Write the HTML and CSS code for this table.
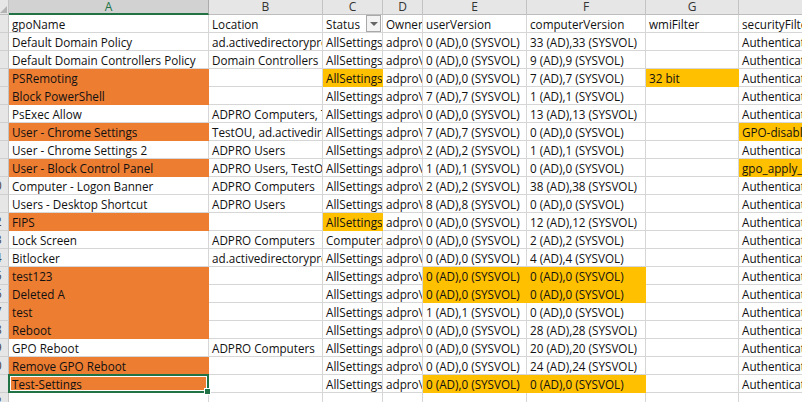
FILE: index.html
```html
<!DOCTYPE html>
<html>
<head>
<meta charset="utf-8">
<link rel="stylesheet" href="styles.css">
</head>
<body>
<div class="sheet">
  <div class="corner"><span class="tri"></span></div>
  <div class="ch sel-col">A</div><div class="ch">B</div><div class="ch">C</div><div class="ch">D</div><div class="ch">E</div><div class="ch">F</div><div class="ch">G</div><div class="ch"></div>

  <div class="rh">1</div><div class="c">gpoName</div><div class="c">Location</div><div class="c filter-cell">Status<span class="filter"><span class="ftri"></span></span></div><div class="c">Owner</div><div class="c">userVersion</div><div class="c">computerVersion</div><div class="c">wmiFilter</div><div class="c">securityFilter</div>

  <div class="rh">2</div><div class="c">Default Domain Policy</div><div class="c">ad.activedirectorypro.com</div><div class="c">AllSettings</div><div class="c">adpro\</div><div class="c">0 (AD),0 (SYSVOL)</div><div class="c">33 (AD),33 (SYSVOL)</div><div class="c"></div><div class="c">Authenticated Users</div>

  <div class="rh">3</div><div class="c">Default Domain Controllers Policy</div><div class="c">Domain Controllers</div><div class="c">AllSettings</div><div class="c">adpro\</div><div class="c">0 (AD),0 (SYSVOL)</div><div class="c">9 (AD),9 (SYSVOL)</div><div class="c"></div><div class="c">Authenticated Users</div>

  <div class="rh">4</div><div class="c o">PSRemoting</div><div class="c"></div><div class="c y">AllSettings</div><div class="c">adpro\</div><div class="c">0 (AD),0 (SYSVOL)</div><div class="c">7 (AD),7 (SYSVOL)</div><div class="c y">32 bit</div><div class="c">Authenticated Users</div>

  <div class="rh">5</div><div class="c o">Block PowerShell</div><div class="c"></div><div class="c">AllSettings</div><div class="c">adpro\</div><div class="c">7 (AD),7 (SYSVOL)</div><div class="c">1 (AD),1 (SYSVOL)</div><div class="c"></div><div class="c">Authenticated Users</div>

  <div class="rh">6</div><div class="c">PsExec Allow</div><div class="c">ADPRO Computers, TestOU</div><div class="c">AllSettings</div><div class="c">adpro\</div><div class="c">0 (AD),0 (SYSVOL)</div><div class="c">13 (AD),13 (SYSVOL)</div><div class="c"></div><div class="c">Authenticated Users</div>

  <div class="rh">7</div><div class="c o">User - Chrome Settings</div><div class="c">TestOU, ad.activedirectorypro.com</div><div class="c">AllSettings</div><div class="c">adpro\</div><div class="c">7 (AD),7 (SYSVOL)</div><div class="c">0 (AD),0 (SYSVOL)</div><div class="c"></div><div class="c y">GPO-disabled</div>

  <div class="rh">8</div><div class="c">User - Chrome Settings 2</div><div class="c">ADPRO Users</div><div class="c">AllSettings</div><div class="c">adpro\</div><div class="c">2 (AD),2 (SYSVOL)</div><div class="c">1 (AD),1 (SYSVOL)</div><div class="c"></div><div class="c">Authenticated Users</div>

  <div class="rh">9</div><div class="c o">User - Block Control Panel</div><div class="c">ADPRO Users, TestOU</div><div class="c">AllSettings</div><div class="c">adpro\</div><div class="c">1 (AD),1 (SYSVOL)</div><div class="c">0 (AD),0 (SYSVOL)</div><div class="c"></div><div class="c y">gpo_apply_group</div>

  <div class="rh">10</div><div class="c">Computer - Logon Banner</div><div class="c">ADPRO Computers</div><div class="c">AllSettings</div><div class="c">adpro\</div><div class="c">2 (AD),2 (SYSVOL)</div><div class="c">38 (AD),38 (SYSVOL)</div><div class="c"></div><div class="c">Authenticated Users</div>

  <div class="rh">11</div><div class="c">Users - Desktop Shortcut</div><div class="c">ADPRO Users</div><div class="c">AllSettings</div><div class="c">adpro\</div><div class="c">8 (AD),8 (SYSVOL)</div><div class="c">0 (AD),0 (SYSVOL)</div><div class="c"></div><div class="c">Authenticated Users</div>

  <div class="rh">12</div><div class="c o">FIPS</div><div class="c"></div><div class="c y">AllSettings</div><div class="c">adpro\</div><div class="c">0 (AD),0 (SYSVOL)</div><div class="c">12 (AD),12 (SYSVOL)</div><div class="c"></div><div class="c">Authenticated Users</div>

  <div class="rh">13</div><div class="c">Lock Screen</div><div class="c">ADPRO Computers</div><div class="c">ComputerSettingsDisabled</div><div class="c">adpro\</div><div class="c">0 (AD),0 (SYSVOL)</div><div class="c">2 (AD),2 (SYSVOL)</div><div class="c"></div><div class="c">Authenticated Users</div>

  <div class="rh">14</div><div class="c">Bitlocker</div><div class="c">ad.activedirectorypro.com</div><div class="c">AllSettings</div><div class="c">adpro\</div><div class="c">0 (AD),0 (SYSVOL)</div><div class="c">4 (AD),4 (SYSVOL)</div><div class="c"></div><div class="c">Authenticated Users</div>

  <div class="rh">15</div><div class="c o">test123</div><div class="c"></div><div class="c">AllSettings</div><div class="c">adpro\</div><div class="c y">0 (AD),0 (SYSVOL)</div><div class="c y">0 (AD),0 (SYSVOL)</div><div class="c"></div><div class="c">Authenticated Users</div>

  <div class="rh">16</div><div class="c o">Deleted A</div><div class="c"></div><div class="c">AllSettings</div><div class="c">adpro\</div><div class="c y">0 (AD),0 (SYSVOL)</div><div class="c y">0 (AD),0 (SYSVOL)</div><div class="c"></div><div class="c">Authenticated Users</div>

  <div class="rh">17</div><div class="c o">test</div><div class="c"></div><div class="c">AllSettings</div><div class="c">adpro\</div><div class="c">1 (AD),1 (SYSVOL)</div><div class="c">0 (AD),0 (SYSVOL)</div><div class="c"></div><div class="c">Authenticated Users</div>

  <div class="rh">18</div><div class="c o">Reboot</div><div class="c"></div><div class="c">AllSettings</div><div class="c">adpro\</div><div class="c">0 (AD),0 (SYSVOL)</div><div class="c">28 (AD),28 (SYSVOL)</div><div class="c"></div><div class="c">Authenticated Users</div>

  <div class="rh">19</div><div class="c">GPO Reboot</div><div class="c">ADPRO Computers</div><div class="c">AllSettings</div><div class="c">adpro\</div><div class="c">0 (AD),0 (SYSVOL)</div><div class="c">20 (AD),20 (SYSVOL)</div><div class="c"></div><div class="c">Authenticated Users</div>

  <div class="rh">20</div><div class="c o">Remove GPO Reboot</div><div class="c"></div><div class="c">AllSettings</div><div class="c">adpro\</div><div class="c">0 (AD),0 (SYSVOL)</div><div class="c">24 (AD),24 (SYSVOL)</div><div class="c"></div><div class="c">Authenticated Users</div>

  <div class="rh">21</div><div class="c o active">Test-Settings<span class="selbox"><span class="handle"></span></span></div><div class="c"></div><div class="c">AllSettings</div><div class="c">adpro\</div><div class="c y">0 (AD),0 (SYSVOL)</div><div class="c y">0 (AD),0 (SYSVOL)</div><div class="c"></div><div class="c">Authenticated Users</div>

  <div class="rh">22</div><div class="c"></div><div class="c"></div><div class="c"></div><div class="c"></div><div class="c"></div><div class="c"></div><div class="c"></div><div class="c"></div>
</div>
</body>
</html>
```

FILE: styles.css
```css
html, body {
  margin: 0;
  padding: 0;
  background: #ffffff;
  overflow: hidden;
}

.sheet {
  display: grid;
  grid-template-columns: 27px 200px 114px 60px 40px 104px 119px 93px 110px;
  grid-template-rows: 15px;
  grid-auto-rows: 18px;
  margin-left: -18px;
  width: max-content;
  font-family: "Open Sans", "Liberation Sans", Arial, sans-serif;
  font-size: 11.7px;
  color: #111111;
}

.corner {
  box-sizing: border-box;
  background: #e6e6e6;
  border-right: 1px solid #c3c3c3;
  border-bottom: 1px solid #bdbdbd;
  display: flex;
  align-items: flex-end;
  justify-content: flex-end;
  padding: 0 1px 1px 0;
}

.tri {
  width: 0;
  height: 0;
  border-left: 7px solid transparent;
  border-bottom: 7px solid #b3b3b3;
}

.ch {
  box-sizing: border-box;
  background: #e6e6e6;
  border-right: 1px solid #c3c3c3;
  border-bottom: 1px solid #bdbdbd;
  text-align: center;
  line-height: 14px;
  font-size: 12px;
  color: #333333;
  overflow: hidden;
}

.ch.sel-col {
  background: #d2d2d2;
  color: #217346;
  border-bottom: 2px solid #217346;
  border-right-color: #ababab;
}

.rh {
  box-sizing: border-box;
  background: #e6e6e6;
  border-right: 1px solid #c3c3c3;
  border-bottom: 1px solid #cfcfcf;
  text-align: center;
  line-height: 17px;
  color: #444444;
}

.c {
  position: relative;
  box-sizing: border-box;
  border-right: 1px solid #d6d6d6;
  border-bottom: 1px solid #d6d6d6;
  padding: 1px 3px 0 3px;
  line-height: 16px;
  white-space: nowrap;
  overflow: hidden;
}

.c.o {
  background: #ed7d31;
  border-color: #ed7d31;
}

.c.y {
  background: #ffc000;
  border-color: #ffc000;
}

.c.active {
  overflow: visible;
}

.selbox {
  position: absolute;
  left: -1px;
  top: -1px;
  right: -1px;
  bottom: -1px;
  border: 2px solid #217346;
  box-shadow: inset 0 0 0 1px #ffffff;
  pointer-events: none;
  z-index: 2;
}

.handle {
  position: absolute;
  right: -4px;
  bottom: -4px;
  width: 5px;
  height: 5px;
  background: #217346;
  border: 1px solid #ffffff;
}

.filter-cell {
  overflow: visible;
}

.filter {
  position: absolute;
  right: 1px;
  top: 0;
  width: 15px;
  height: 17px;
  box-sizing: border-box;
  border: 1px solid #a9a9a9;
  background: #f3f3f3;
  display: flex;
  align-items: center;
  justify-content: center;
}

.ftri {
  width: 0;
  height: 0;
  border-left: 4px solid transparent;
  border-right: 4px solid transparent;
  border-top: 4px solid #666666;
}
```
